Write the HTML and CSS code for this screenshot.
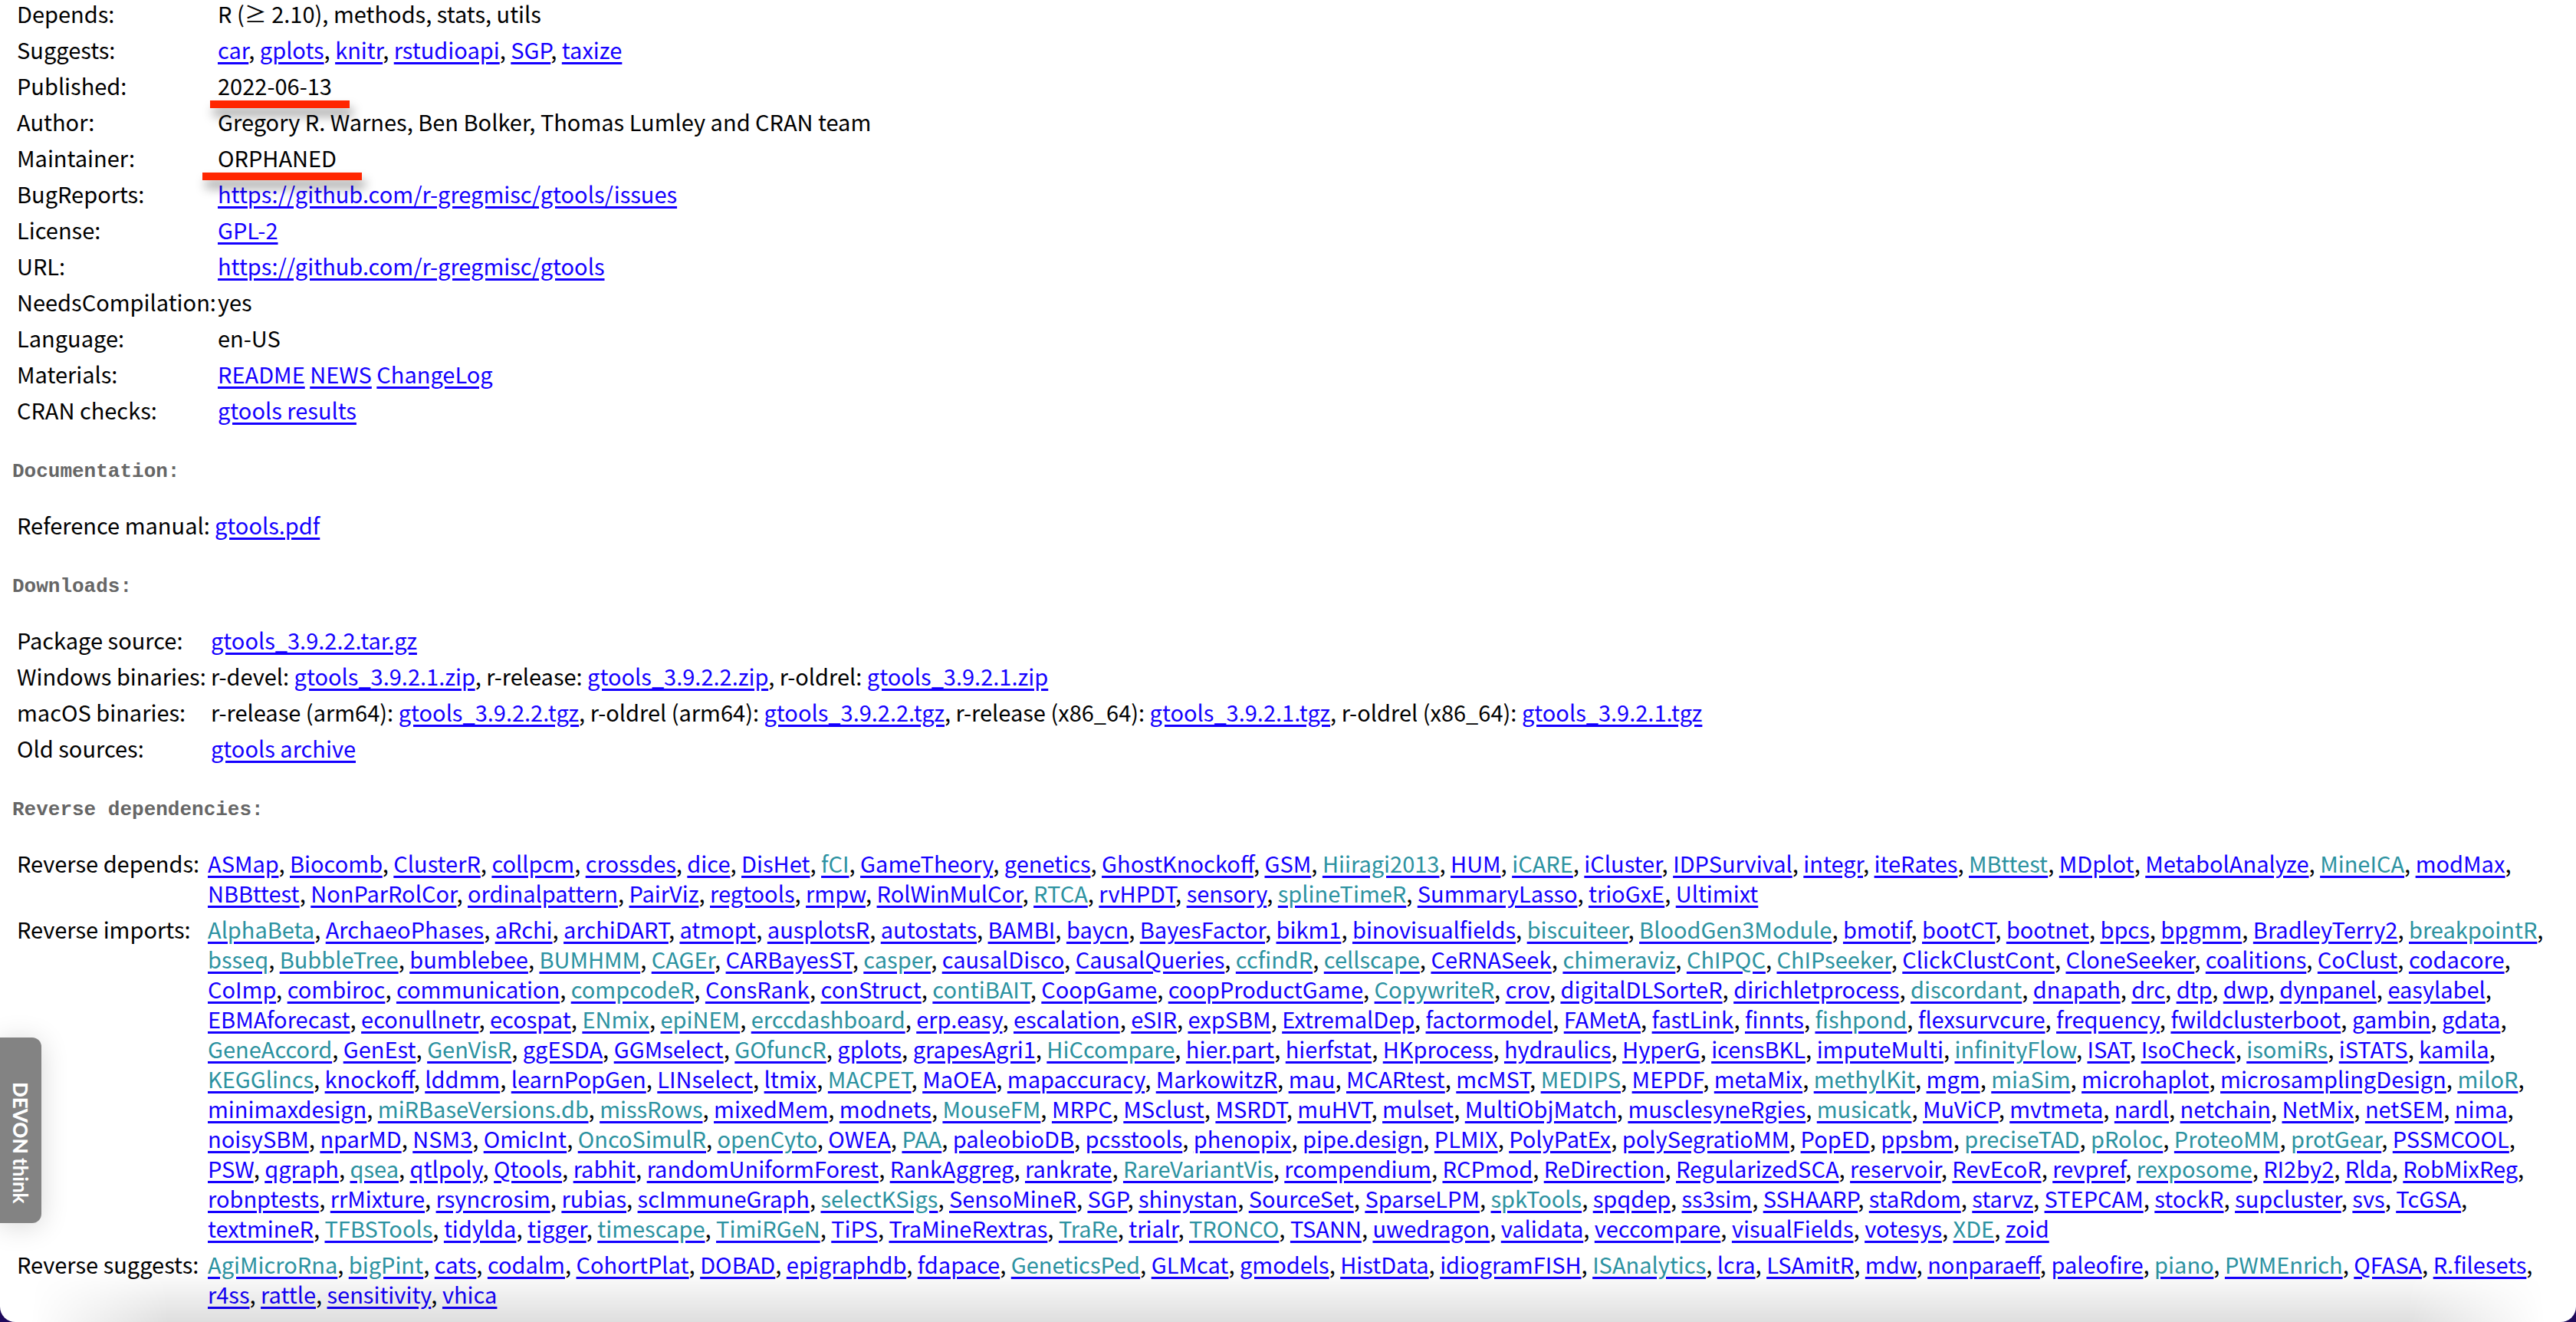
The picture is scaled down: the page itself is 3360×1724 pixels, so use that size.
FILE: index.html
```html
<!DOCTYPE html>
<html lang="en">
<head>
<meta charset="utf-8">
<title>CRAN - Package gtools</title>
<link rel="stylesheet" href="styles.css">
</head>
<body>
<main class="page">
<table class="info summary">
<colgroup><col class="label"><col></colgroup>
<tr><td>Depends:</td><td>R (≥ 2.10), methods, stats, utils</td></tr>
<tr><td>Suggests:</td><td><a href="#">car</a>, <a href="#">gplots</a>, <a href="#">knitr</a>, <a href="#">rstudioapi</a>, <a href="#">SGP</a>, <a href="#">taxize</a></td></tr>
<tr><td>Published:</td><td class="marked">2022-06-13<span class="marker marker-date"></span></td></tr>
<tr><td>Author:</td><td>Gregory R. Warnes, Ben Bolker, Thomas Lumley and CRAN team</td></tr>
<tr><td>Maintainer:</td><td class="marked">ORPHANED<span class="marker marker-maintainer"></span></td></tr>
<tr><td>BugReports:</td><td><a href="#">https://github.com/r-gregmisc/gtools/issues</a></td></tr>
<tr><td>License:</td><td><a href="#">GPL-2</a></td></tr>
<tr><td>URL:</td><td><a href="#">https://github.com/r-gregmisc/gtools</a></td></tr>
<tr><td>NeedsCompilation:</td><td>yes</td></tr>
<tr><td>Language:</td><td>en-US</td></tr>
<tr><td>Materials:</td><td><a href="#">README</a> <a href="#">NEWS</a> <a href="#">ChangeLog</a></td></tr>
<tr><td>CRAN checks:</td><td><a href="#">gtools results</a></td></tr>
</table>
<h4>Documentation:</h4>
<table class="info documentation">
<colgroup><col class="label"><col></colgroup>
<tr><td>Reference manual:</td><td><a href="#">gtools.pdf</a></td></tr>
</table>
<h4>Downloads:</h4>
<table class="info downloads">
<colgroup><col class="label"><col></colgroup>
<tr><td>Package source:</td><td><a href="#">gtools_3.9.2.2.tar.gz</a></td></tr>
<tr><td>Windows binaries:</td><td>r-devel: <a href="#">gtools_3.9.2.1.zip</a>, r-release: <a href="#">gtools_3.9.2.2.zip</a>, r-oldrel: <a href="#">gtools_3.9.2.1.zip</a></td></tr>
<tr><td>macOS binaries:</td><td>r-release (arm64): <a href="#">gtools_3.9.2.2.tgz</a>, r-oldrel (arm64): <a href="#">gtools_3.9.2.2.tgz</a>, r-release (x86_64): <a href="#">gtools_3.9.2.1.tgz</a>, r-oldrel (x86_64): <a href="#">gtools_3.9.2.1.tgz</a></td></tr>
<tr><td>Old sources:</td><td><a href="#">gtools archive</a></td></tr>
</table>
<h4>Reverse dependencies:</h4>
<table class="info reverse">
<colgroup><col class="label"><col></colgroup>
<tr><td>Reverse depends:</td><td>
<a href="#">ASMap</a>, <a href="#">Biocomb</a>, <a href="#">ClusterR</a>, <a href="#">collpcm</a>, <a href="#">crossdes</a>, <a href="#">dice</a>, <a href="#">DisHet</a>, <a class="bioc" href="#">fCI</a>, <a href="#">GameTheory</a>, <a href="#">genetics</a>, <a href="#">GhostKnockoff</a>, <a href="#">GSM</a>, <a class="bioc" href="#">Hiiragi2013</a>, <a href="#">HUM</a>, <a class="bioc" href="#">iCARE</a>, <a href="#">iCluster</a>, <a href="#">IDPSurvival</a>, <a href="#">integr</a>, <a href="#">iteRates</a>, <a class="bioc" href="#">MBttest</a>, <a href="#">MDplot</a>, <a href="#">MetabolAnalyze</a>, <a class="bioc" href="#">MineICA</a>, <a href="#">modMax</a>,<br>
<a href="#">NBBttest</a>, <a href="#">NonParRolCor</a>, <a href="#">ordinalpattern</a>, <a href="#">PairViz</a>, <a href="#">regtools</a>, <a href="#">rmpw</a>, <a href="#">RolWinMulCor</a>, <a class="bioc" href="#">RTCA</a>, <a href="#">rvHPDT</a>, <a href="#">sensory</a>, <a class="bioc" href="#">splineTimeR</a>, <a href="#">SummaryLasso</a>, <a href="#">trioGxE</a>, <a href="#">Ultimixt</a></td></tr>
<tr><td>Reverse imports:</td><td>
<a class="bioc" href="#">AlphaBeta</a>, <a href="#">ArchaeoPhases</a>, <a href="#">aRchi</a>, <a href="#">archiDART</a>, <a href="#">atmopt</a>, <a href="#">ausplotsR</a>, <a href="#">autostats</a>, <a href="#">BAMBI</a>, <a href="#">baycn</a>, <a href="#">BayesFactor</a>, <a href="#">bikm1</a>, <a href="#">binovisualfields</a>, <a class="bioc" href="#">biscuiteer</a>, <a class="bioc" href="#">BloodGen3Module</a>, <a href="#">bmotif</a>, <a href="#">bootCT</a>, <a href="#">bootnet</a>, <a href="#">bpcs</a>, <a href="#">bpgmm</a>, <a href="#">BradleyTerry2</a>, <a class="bioc" href="#">breakpointR</a>,<br>
<a class="bioc" href="#">bsseq</a>, <a class="bioc" href="#">BubbleTree</a>, <a href="#">bumblebee</a>, <a class="bioc" href="#">BUMHMM</a>, <a class="bioc" href="#">CAGEr</a>, <a href="#">CARBayesST</a>, <a class="bioc" href="#">casper</a>, <a href="#">causalDisco</a>, <a href="#">CausalQueries</a>, <a class="bioc" href="#">ccfindR</a>, <a class="bioc" href="#">cellscape</a>, <a href="#">CeRNASeek</a>, <a class="bioc" href="#">chimeraviz</a>, <a class="bioc" href="#">ChIPQC</a>, <a class="bioc" href="#">ChIPseeker</a>, <a href="#">ClickClustCont</a>, <a href="#">CloneSeeker</a>, <a href="#">coalitions</a>, <a href="#">CoClust</a>, <a href="#">codacore</a>,<br>
<a href="#">CoImp</a>, <a href="#">combiroc</a>, <a href="#">communication</a>, <a class="bioc" href="#">compcodeR</a>, <a href="#">ConsRank</a>, <a href="#">conStruct</a>, <a class="bioc" href="#">contiBAIT</a>, <a href="#">CoopGame</a>, <a href="#">coopProductGame</a>, <a class="bioc" href="#">CopywriteR</a>, <a href="#">crov</a>, <a href="#">digitalDLSorteR</a>, <a href="#">dirichletprocess</a>, <a class="bioc" href="#">discordant</a>, <a href="#">dnapath</a>, <a href="#">drc</a>, <a href="#">dtp</a>, <a href="#">dwp</a>, <a href="#">dynpanel</a>, <a href="#">easylabel</a>,<br>
<a href="#">EBMAforecast</a>, <a href="#">econullnetr</a>, <a href="#">ecospat</a>, <a class="bioc" href="#">ENmix</a>, <a class="bioc" href="#">epiNEM</a>, <a class="bioc" href="#">erccdashboard</a>, <a href="#">erp.easy</a>, <a href="#">escalation</a>, <a href="#">eSIR</a>, <a href="#">expSBM</a>, <a href="#">ExtremalDep</a>, <a href="#">factormodel</a>, <a href="#">FAMetA</a>, <a href="#">fastLink</a>, <a href="#">finnts</a>, <a class="bioc" href="#">fishpond</a>, <a href="#">flexsurvcure</a>, <a href="#">frequency</a>, <a href="#">fwildclusterboot</a>, <a href="#">gambin</a>, <a href="#">gdata</a>,<br>
<a class="bioc" href="#">GeneAccord</a>, <a href="#">GenEst</a>, <a class="bioc" href="#">GenVisR</a>, <a href="#">ggESDA</a>, <a href="#">GGMselect</a>, <a class="bioc" href="#">GOfuncR</a>, <a href="#">gplots</a>, <a href="#">grapesAgri1</a>, <a class="bioc" href="#">HiCcompare</a>, <a href="#">hier.part</a>, <a href="#">hierfstat</a>, <a href="#">HKprocess</a>, <a href="#">hydraulics</a>, <a href="#">HyperG</a>, <a href="#">icensBKL</a>, <a href="#">imputeMulti</a>, <a class="bioc" href="#">infinityFlow</a>, <a href="#">ISAT</a>, <a href="#">IsoCheck</a>, <a class="bioc" href="#">isomiRs</a>, <a href="#">iSTATS</a>, <a href="#">kamila</a>,<br>
<a class="bioc" href="#">KEGGlincs</a>, <a href="#">knockoff</a>, <a href="#">lddmm</a>, <a href="#">learnPopGen</a>, <a href="#">LINselect</a>, <a href="#">ltmix</a>, <a class="bioc" href="#">MACPET</a>, <a href="#">MaOEA</a>, <a href="#">mapaccuracy</a>, <a href="#">MarkowitzR</a>, <a href="#">mau</a>, <a href="#">MCARtest</a>, <a href="#">mcMST</a>, <a class="bioc" href="#">MEDIPS</a>, <a href="#">MEPDF</a>, <a href="#">metaMix</a>, <a class="bioc" href="#">methylKit</a>, <a href="#">mgm</a>, <a class="bioc" href="#">miaSim</a>, <a href="#">microhaplot</a>, <a href="#">microsamplingDesign</a>, <a class="bioc" href="#">miloR</a>,<br>
<a href="#">minimaxdesign</a>, <a class="bioc" href="#">miRBaseVersions.db</a>, <a class="bioc" href="#">missRows</a>, <a href="#">mixedMem</a>, <a href="#">modnets</a>, <a class="bioc" href="#">MouseFM</a>, <a href="#">MRPC</a>, <a href="#">MSclust</a>, <a href="#">MSRDT</a>, <a href="#">muHVT</a>, <a href="#">mulset</a>, <a href="#">MultiObjMatch</a>, <a href="#">musclesyneRgies</a>, <a class="bioc" href="#">musicatk</a>, <a href="#">MuViCP</a>, <a href="#">mvtmeta</a>, <a href="#">nardl</a>, <a href="#">netchain</a>, <a href="#">NetMix</a>, <a href="#">netSEM</a>, <a href="#">nima</a>,<br>
<a href="#">noisySBM</a>, <a href="#">nparMD</a>, <a href="#">NSM3</a>, <a href="#">OmicInt</a>, <a class="bioc" href="#">OncoSimulR</a>, <a class="bioc" href="#">openCyto</a>, <a href="#">OWEA</a>, <a class="bioc" href="#">PAA</a>, <a href="#">paleobioDB</a>, <a href="#">pcsstools</a>, <a href="#">phenopix</a>, <a href="#">pipe.design</a>, <a href="#">PLMIX</a>, <a href="#">PolyPatEx</a>, <a href="#">polySegratioMM</a>, <a href="#">PopED</a>, <a href="#">ppsbm</a>, <a class="bioc" href="#">preciseTAD</a>, <a class="bioc" href="#">pRoloc</a>, <a class="bioc" href="#">ProteoMM</a>, <a class="bioc" href="#">protGear</a>, <a href="#">PSSMCOOL</a>,<br>
<a href="#">PSW</a>, <a href="#">qgraph</a>, <a class="bioc" href="#">qsea</a>, <a href="#">qtlpoly</a>, <a href="#">Qtools</a>, <a href="#">rabhit</a>, <a href="#">randomUniformForest</a>, <a href="#">RankAggreg</a>, <a href="#">rankrate</a>, <a class="bioc" href="#">RareVariantVis</a>, <a href="#">rcompendium</a>, <a href="#">RCPmod</a>, <a href="#">ReDirection</a>, <a href="#">RegularizedSCA</a>, <a href="#">reservoir</a>, <a href="#">RevEcoR</a>, <a href="#">revpref</a>, <a class="bioc" href="#">rexposome</a>, <a href="#">RI2by2</a>, <a href="#">Rlda</a>, <a href="#">RobMixReg</a>,<br>
<a href="#">robnptests</a>, <a href="#">rrMixture</a>, <a href="#">rsyncrosim</a>, <a href="#">rubias</a>, <a href="#">scImmuneGraph</a>, <a class="bioc" href="#">selectKSigs</a>, <a href="#">SensoMineR</a>, <a href="#">SGP</a>, <a href="#">shinystan</a>, <a href="#">SourceSet</a>, <a href="#">SparseLPM</a>, <a class="bioc" href="#">spkTools</a>, <a href="#">spqdep</a>, <a href="#">ss3sim</a>, <a href="#">SSHAARP</a>, <a href="#">staRdom</a>, <a href="#">starvz</a>, <a href="#">STEPCAM</a>, <a href="#">stockR</a>, <a href="#">supcluster</a>, <a href="#">svs</a>, <a href="#">TcGSA</a>,<br>
<a href="#">textmineR</a>, <a class="bioc" href="#">TFBSTools</a>, <a href="#">tidylda</a>, <a href="#">tigger</a>, <a class="bioc" href="#">timescape</a>, <a class="bioc" href="#">TimiRGeN</a>, <a href="#">TiPS</a>, <a href="#">TraMineRextras</a>, <a class="bioc" href="#">TraRe</a>, <a href="#">trialr</a>, <a class="bioc" href="#">TRONCO</a>, <a href="#">TSANN</a>, <a href="#">uwedragon</a>, <a href="#">validata</a>, <a href="#">veccompare</a>, <a href="#">visualFields</a>, <a href="#">votesys</a>, <a class="bioc" href="#">XDE</a>, <a href="#">zoid</a></td></tr>
<tr><td>Reverse suggests:</td><td>
<a class="bioc" href="#">AgiMicroRna</a>, <a class="bioc" href="#">bigPint</a>, <a href="#">cats</a>, <a href="#">codalm</a>, <a href="#">CohortPlat</a>, <a href="#">DOBAD</a>, <a href="#">epigraphdb</a>, <a href="#">fdapace</a>, <a class="bioc" href="#">GeneticsPed</a>, <a href="#">GLMcat</a>, <a href="#">gmodels</a>, <a href="#">HistData</a>, <a href="#">idiogramFISH</a>, <a class="bioc" href="#">ISAnalytics</a>, <a href="#">lcra</a>, <a href="#">LSAmitR</a>, <a href="#">mdw</a>, <a href="#">nonparaeff</a>, <a href="#">paleofire</a>, <a class="bioc" href="#">piano</a>, <a class="bioc" href="#">PWMEnrich</a>, <a href="#">QFASA</a>, <a href="#">R.filesets</a>,<br>
<a href="#">r4ss</a>, <a href="#">rattle</a>, <a href="#">sensitivity</a>, <a href="#">vhica</a></td></tr>
</table>
<div class="shade"></div>
<button class="side-tab" type="button"><b>DEVON</b><span>think</span></button>
</main>
</body>
</html>
```
FILE: styles.css
```css
html {
  background: #1f0a5c;
}

body {
  margin: 0;
  color: #000;
  font: 29px/39px "Noto Sans CJK KR", "Noto Sans", sans-serif;
}

.page {
  position: relative;
  box-sizing: border-box;
  height: 100vh;
  padding: 0 16px;
  overflow: hidden;
  background: #fff;
  border-radius: 0 0 20px 20px;
}

.info {
  width: 100%;
  table-layout: fixed;
  border-spacing: 4px;
  border-collapse: separate;
}

/* The first list is scrolled up against the window edge. */
.info:first-child {
  margin-top: -8px;
}

/* Adjacent rows share one 4px gap. */
.info td {
  padding: 2px;
  vertical-align: top;
  white-space: nowrap;
}

.summary .label {
  width: 258px;
}

.documentation .label {
  width: 254px;
}

.downloads .label {
  width: 249px;
}

.reverse .label {
  width: 245px;
}

h4 {
  margin: 40px 0 29px;
  color: #666;
  font: bold 26px/30px "Liberation Mono", "Courier New", monospace;
}

a {
  color: #1400ff;
  text-decoration: underline 3px #1400ff;
  text-underline-offset: 4px;
}

.bioc {
  color: #2c92a1;
}

.marked {
  position: relative;
}

.marker {
  position: absolute;
  top: 41px;
  height: 10px;
  background: #ff2600;
  box-shadow: 4px 10px 14px rgba(0, 0, 0, 0.4);
}

.marker-date {
  left: -8px;
  width: 182px;
}

.marker-maintainer {
  left: -18px;
  width: 208px;
}

.shade {
  position: absolute;
  right: 0;
  bottom: 0;
  left: 0;
  height: 70px;
  background: linear-gradient(rgba(0, 0, 0, 0), rgba(0, 0, 0, 0.13));
  -webkit-mask: linear-gradient(90deg, transparent 40px, #000 220px, #000 calc(100% - 220px), transparent calc(100% - 40px));
  mask: linear-gradient(90deg, transparent 40px, #000 220px, #000 calc(100% - 220px), transparent calc(100% - 40px));
  pointer-events: none;
}

.side-tab {
  position: absolute;
  bottom: 129px;
  left: 0;
  display: flex;
  gap: 5px;
  align-items: center;
  justify-content: center;
  width: 54px;
  height: 242px;
  padding: 32px 0 0;
  border: 0;
  border-radius: 0 12px 12px 0;
  background: #838383;
  box-shadow: 0 4px 36px rgba(0, 0, 0, 0.16);
  color: #fff;
  font: bold 26px/54px Lato, sans-serif;
  writing-mode: vertical-rl;
}

.side-tab b {
  font-weight: 900;
}
```
